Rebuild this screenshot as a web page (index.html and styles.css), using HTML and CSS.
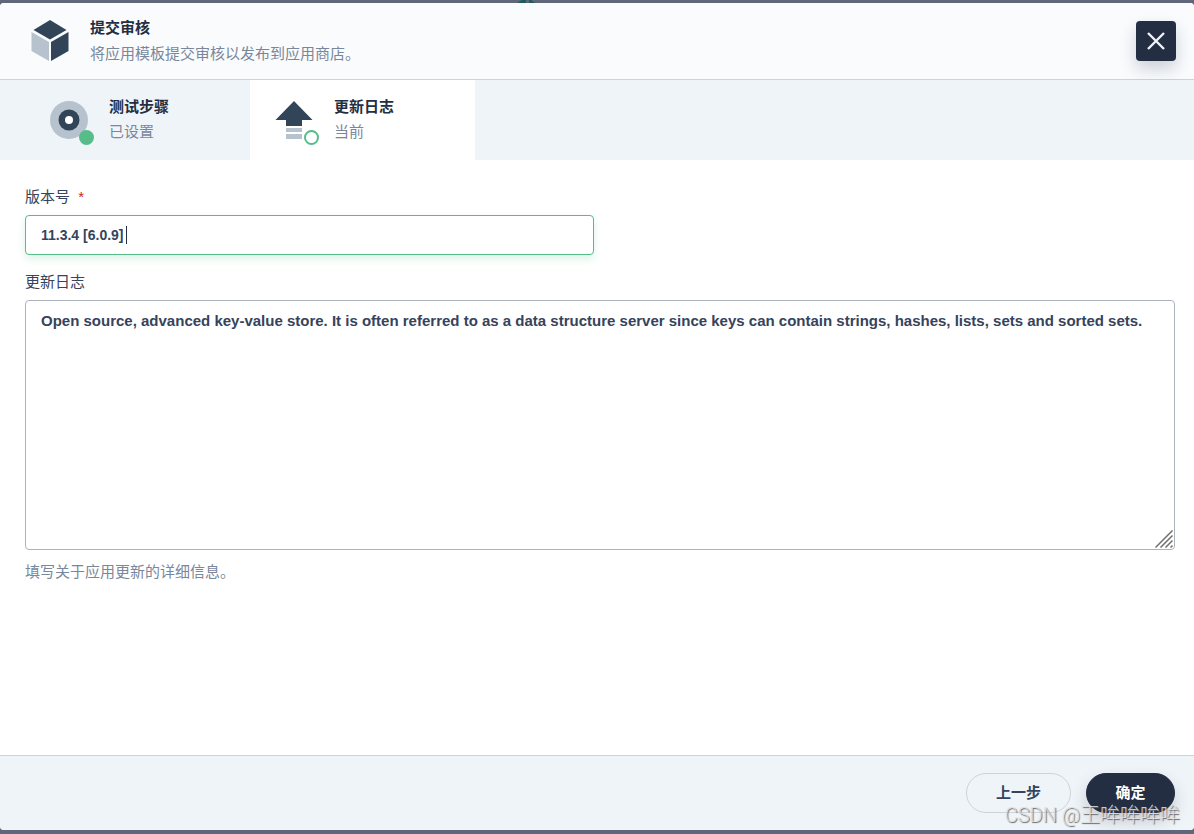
FILE: index.html
```html
<!DOCTYPE html>
<html lang="zh-CN">
<head>
<meta charset="utf-8">
<meta name="viewport" content="width=device-width, initial-scale=1">
<title>提交审核</title>
<link rel="stylesheet" href="styles.css">
</head>
<body>
<svg class="backdrop-mark" width="18" height="3" viewBox="0 0 18 3" aria-hidden="true"><path d="M0 3 5 0h4v3zM12 0h2l4 3h-6z" fill="#1b5f5b"/></svg>
<main class="modal">
  <header class="header">
    <svg class="header-icon" width="40" height="44" viewBox="0 0 40 44" aria-hidden="true">
      <path d="M20 1 36.500 11 20 20.500 3.500 11z" fill="#324558"/>
      <path d="M1.500 13 19 23v19L1.500 32z" fill="#b6c2cd"/>
      <path d="M38.500 13 21 23v19l17.500-10z" fill="#324558"/>
    </svg>
    <div class="heading">
      <h1 class="title">提交审核</h1>
      <p class="subtitle">将应用模板提交审核以发布到应用商店。</p>
    </div>
    <button class="close" type="button" aria-label="关闭">
      <svg width="20" height="20" viewBox="0 0 20 20" aria-hidden="true"><path d="m2 2 16 16M18 2 2 18" stroke="#eff4f9" stroke-width="2.400"/></svg>
    </button>
  </header>
  <nav class="steps">
    <button class="step" type="button">
      <svg class="step-icon" width="48" height="48" viewBox="0 0 48 48" aria-hidden="true">
        <circle cx="21" cy="20" r="19" fill="#b6c2cd"/>
        <circle cx="21" cy="20" r="10.500" fill="#324558"/>
        <circle cx="21" cy="20" r="4" fill="#fff"/>
        <circle cx="38.500" cy="37.500" r="7.500" fill="#55bc8a"/>
      </svg>
      <span class="step-text"><strong class="step-name">测试步骤</strong><span class="step-state">已设置</span></span>
    </button>
    <button class="step step-current" type="button" aria-current="step">
      <svg class="step-icon" width="48" height="48" viewBox="0 0 48 48" aria-hidden="true">
        <path d="M21 1 39.500 20H29v6H13v-6H2.500z" fill="#324558"/>
        <path d="M13 28h16v4H13zM13 34h16v5H13z" fill="#b6c2cd"/>
        <circle cx="38.500" cy="37.500" r="8" fill="#fff"/>
        <circle cx="38.500" cy="37.500" r="6.500" fill="#fff" stroke="#55bc8a" stroke-width="2"/>
      </svg>
      <span class="step-text"><strong class="step-name">更新日志</strong><span class="step-state">当前</span></span>
    </button>
  </nav>
  <form class="form" id="release">
    <div class="field field-half">
      <label class="label" for="version">版本号 <span class="required">*</span></label>
      <div class="control">
        <input class="input" id="version" type="text" value="11.3.4 [6.0.9]" required>
        <span class="caret"></span>
      </div>
    </div>
    <div class="field">
      <label class="label" for="changelog">更新日志</label>
      <div class="control">
        <textarea class="textarea" id="changelog" spellcheck="false">Open source, advanced key-value store. It is often referred to as a data structure server since keys can contain strings, hashes, lists, sets and sorted sets.</textarea>
        <svg class="grip" width="18" height="18" viewBox="0 0 18 18" aria-hidden="true"><path d="M.500 17.500 17.500.500M5.500 17.500l12-12M10.500 17.500l7-7M15.500 17.500l2-2" stroke="#707070" stroke-width="1.500"/></svg>
      </div>
      <p class="hint">填写关于应用更新的详细信息。</p>
    </div>
  </form>
  <footer class="footer">
    <button class="button" type="button">上一步</button>
    <button class="button button-primary" type="submit" form="release">确定</button>
  </footer>
</main>
<div class="watermark">CSDN @王哞哞哞哞</div>
</body>
</html>
```
FILE: styles.css
```css
* { box-sizing: border-box; }
body {
  margin: 0;
  min-height: 100vh;
  padding: 3px 0 4px;
  display: flex;
  background: #60677a;
  color: #36435c;
  font: 15px/20px "Liberation Sans", "Noto Sans CJK SC", sans-serif;
}
button, input, textarea { font: inherit; color: inherit; }
h1, p { margin: 0; }
.backdrop-mark { position: absolute; top: 0; left: 517px; }
.modal {
  flex: 1;
  min-width: 0;
  display: flex;
  flex-direction: column;
  overflow: hidden;
  border-radius: 4px;
  background: #fff;
}
.header {
  display: flex;
  align-items: center;
  padding: 14px 18px 15px 30px;
  border-bottom: 1px solid #ccd3db;
  background: #f9fbfd;
}
.header-icon { margin-right: 20px; }
.heading { flex: 1; padding-top: 1px; }
.title { font-size: 15px; line-height: 20px; color: #242e42; margin-bottom: 6px; }
.subtitle { color: #79879c; }
.close {
  display: grid;
  place-items: center;
  width: 40px;
  height: 40px;
  padding: 0;
  border: 0;
  border-radius: 4px;
  background: #242e42;
  box-shadow: 0 8px 16px rgba(36, 46, 66, .2);
}
.steps { display: flex; background: #eff4f8; }
.step {
  display: flex;
  align-items: center;
  width: 225px;
  height: 80px;
  padding: 0 23px 2px;
  border: 0;
  background: transparent;
  text-align: left;
}
.step:first-child { width: 250px; padding-left: 48px; }
.step-current { background: #fff; }
.step-icon { margin: 10px 13px 0 0; }
.step-text { display: flex; flex-direction: column; gap: 5px; }
.step-name { color: #242e42; }
.step-state { color: #79879c; }
.form {
  flex: 1;
  display: flex;
  flex-direction: column;
  gap: 18px;
  padding: 27px 19px 28px 25px;
}
.field-half { width: calc(50% - 6px); }
.label { display: block; margin-bottom: 8px; }
.field + .field { margin-top: -1px; }
.required { margin-left: 4px; color: #ca2621; }
.control { position: relative; display: flex; }
.input, .textarea {
  width: 100%;
  border: 1px solid #abb4be;
  border-radius: 4px;
  outline: 0;
  background: #fff;
  font-weight: 700;
}
.input {
  height: 40px;
  padding: 0 15px;
  border-color: #55bc8a;
  font-size: 14px;
  box-shadow: 0 4px 8px rgba(85, 188, 138, .2);
}
.caret {
  position: absolute;
  top: 11px;
  left: 101px;
  width: 1px;
  height: 18px;
  background: #242e42;
}
.textarea { height: 250px; padding: 10px 15px; resize: none; }
.grip { position: absolute; right: 2px; bottom: 2px; }
.hint { margin-top: 12px; color: #79879c; }
.footer {
  display: flex;
  justify-content: flex-end;
  gap: 15px;
  padding: 17px 19px;
  border-top: 1px solid #ccd3db;
  background: #eff4f8;
}
.button {
  height: 40px;
  padding: 0 29px;
  border: 1px solid #ccd3db;
  border-radius: 20px;
  background: transparent;
  font-weight: 700;
}
.button-primary {
  min-width: 89px;
  padding: 0 28px;
  border-color: #242e42;
  background: #242e42;
  color: #fff;
  box-shadow: 0 8px 16px rgba(36, 46, 66, .2);
}
.watermark {
  position: absolute;
  right: 14px;
  bottom: 6px;
  color: rgba(225, 225, 225, .9);
  font: 300 20px/26px Roboto, "Noto Sans CJK SC", sans-serif;
  text-shadow: 1px 1px 1px #666;
  pointer-events: none;
}
```
